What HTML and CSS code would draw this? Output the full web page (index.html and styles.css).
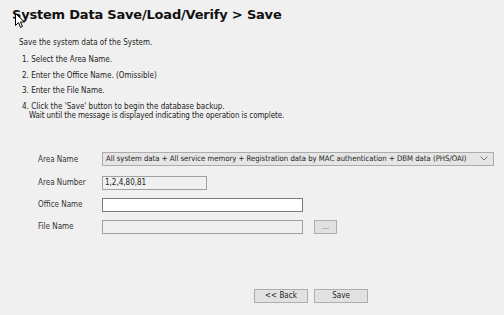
FILE: index.html
```html
<!DOCTYPE html>
<html lang="en">
<head>
    <meta charset="UTF-8">
    <title>System Data Save</title>
    <link rel="stylesheet" href="styles.css">
</head>
<body>
    <div class="page">
        <h1 class="title">System Data Save/Load/Verify &gt; Save</h1>

        <p class="intro">Save the system data of the System.</p>
        <div class="steps">
            <div class="step">1. Select the Area Name.</div>
            <div class="step">2. Enter the Office Name. (Omissible)</div>
            <div class="step">3. Enter the File Name.</div>
            <div class="step">4. Click the 'Save' button to begin the database backup.<br>
                <span class="cont">Wait until the message is displayed indicating the operation is complete.</span></div>
        </div>

        <form class="form">
            <label class="lbl">Area Name</label>
            <div class="select">
                <span>All system data + All service memory + Registration data by MAC authentication + DBM data (PHS/OAI)</span>
                <svg class="caret" width="8" height="5" viewBox="0 0 8 5"><path d="M0.5 0.5 L4 4 L7.5 0.5" fill="none" stroke="#777" stroke-width="1"/></svg>
            </div>

            <label class="lbl">Area Number</label>
            <div><input class="field field-short" type="text" value="1,2,4,80,81" readonly></div>

            <label class="lbl">Office Name</label>
            <div><input class="field field-white" type="text"></div>

            <label class="lbl">File Name</label>
            <div class="file-row">
                <input class="field" type="text" readonly>
                <button class="btn btn-browse" type="button">...</button>
            </div>
        </form>

        <div class="actions">
            <button class="btn btn-nav" type="button">&lt;&lt; Back</button>
            <button class="btn btn-nav" type="button">Save</button>
        </div>

        <svg class="cursor" width="10" height="16" viewBox="0 0 10 16"><path d="M0.5 0.5 L0.5 12.5 L3.5 9.5 L5.5 14.5 L7.5 13.5 L5.5 9 L9.5 9 Z" fill="#fff" stroke="#000" stroke-width="1"/></svg>
    </div>
</body>
</html>
```

FILE: styles.css
```css
body { margin: 0; background-color: #f0f0f0; font-family: "DejaVu Sans Condensed", "DejaVu Sans", Tahoma, sans-serif; color: #222; }
.page { position: relative; width: 504px; height: 315px; overflow: hidden; }

.title { margin: 0; padding: 7px 0 0 12px; font-family: "DejaVu Sans", Verdana, sans-serif; font-size: 13px; font-weight: bold; color: #111; line-height: 16px; letter-spacing: -0.2px; }

.intro { margin: 15px 0 0 19px; font-size: 8px; line-height: 10px; }
.steps { margin: 7px 0 0 22px; font-size: 8px; }
.step { line-height: 9px; margin-bottom: 6.5px; }
.cont { padding-left: 7px; letter-spacing: -0.1px; }

.form {
    display: grid;
    grid-template-columns: 64px auto;
    row-gap: 8px;
    margin: 32px 0 0 38px;
    font-size: 8px;
    align-items: center;
}
.lbl { color: #333; }
.form > .select { margin-bottom: 2px; }

.select {
    display: flex; align-items: center; justify-content: space-between;
    width: 392px; height: 14px; box-sizing: border-box;
    padding: 0 5px 0 3px;
    background-color: #e5e5e5; border: 1px solid #acacac;
    font-size: 7.7px; white-space: nowrap;
}
.field {
    display: block; width: 201px; height: 14px; box-sizing: border-box;
    margin: 0; padding: 0 2px;
    font-family: "DejaVu Sans Condensed", "DejaVu Sans", Tahoma, sans-serif; font-size: 8px; color: #222;
    background-color: #f0f0f0; border: 1px solid #a0a0a0; border-radius: 0; outline: none;
}
.field-short { width: 105px; }
.field-white { background-color: #fff; border-color: #7a7a7a; }

.file-row { display: flex; align-items: center; }

.btn {
    box-sizing: border-box; margin: 0; padding: 0;
    font-family: "DejaVu Sans Condensed", "DejaVu Sans", Tahoma, sans-serif; font-size: 8px; color: #222;
    background-color: #e1e1e1; border: 1px solid #adadad; border-radius: 0;
}
.btn-browse { width: 23px; height: 14px; margin-left: 11px; color: #666; }

.actions { display: flex; gap: 6px; margin: 55px 0 0 254px; }
.btn-nav { width: 54px; height: 14px; }

.cursor { position: absolute; left: 15px; top: 13px; }
```
